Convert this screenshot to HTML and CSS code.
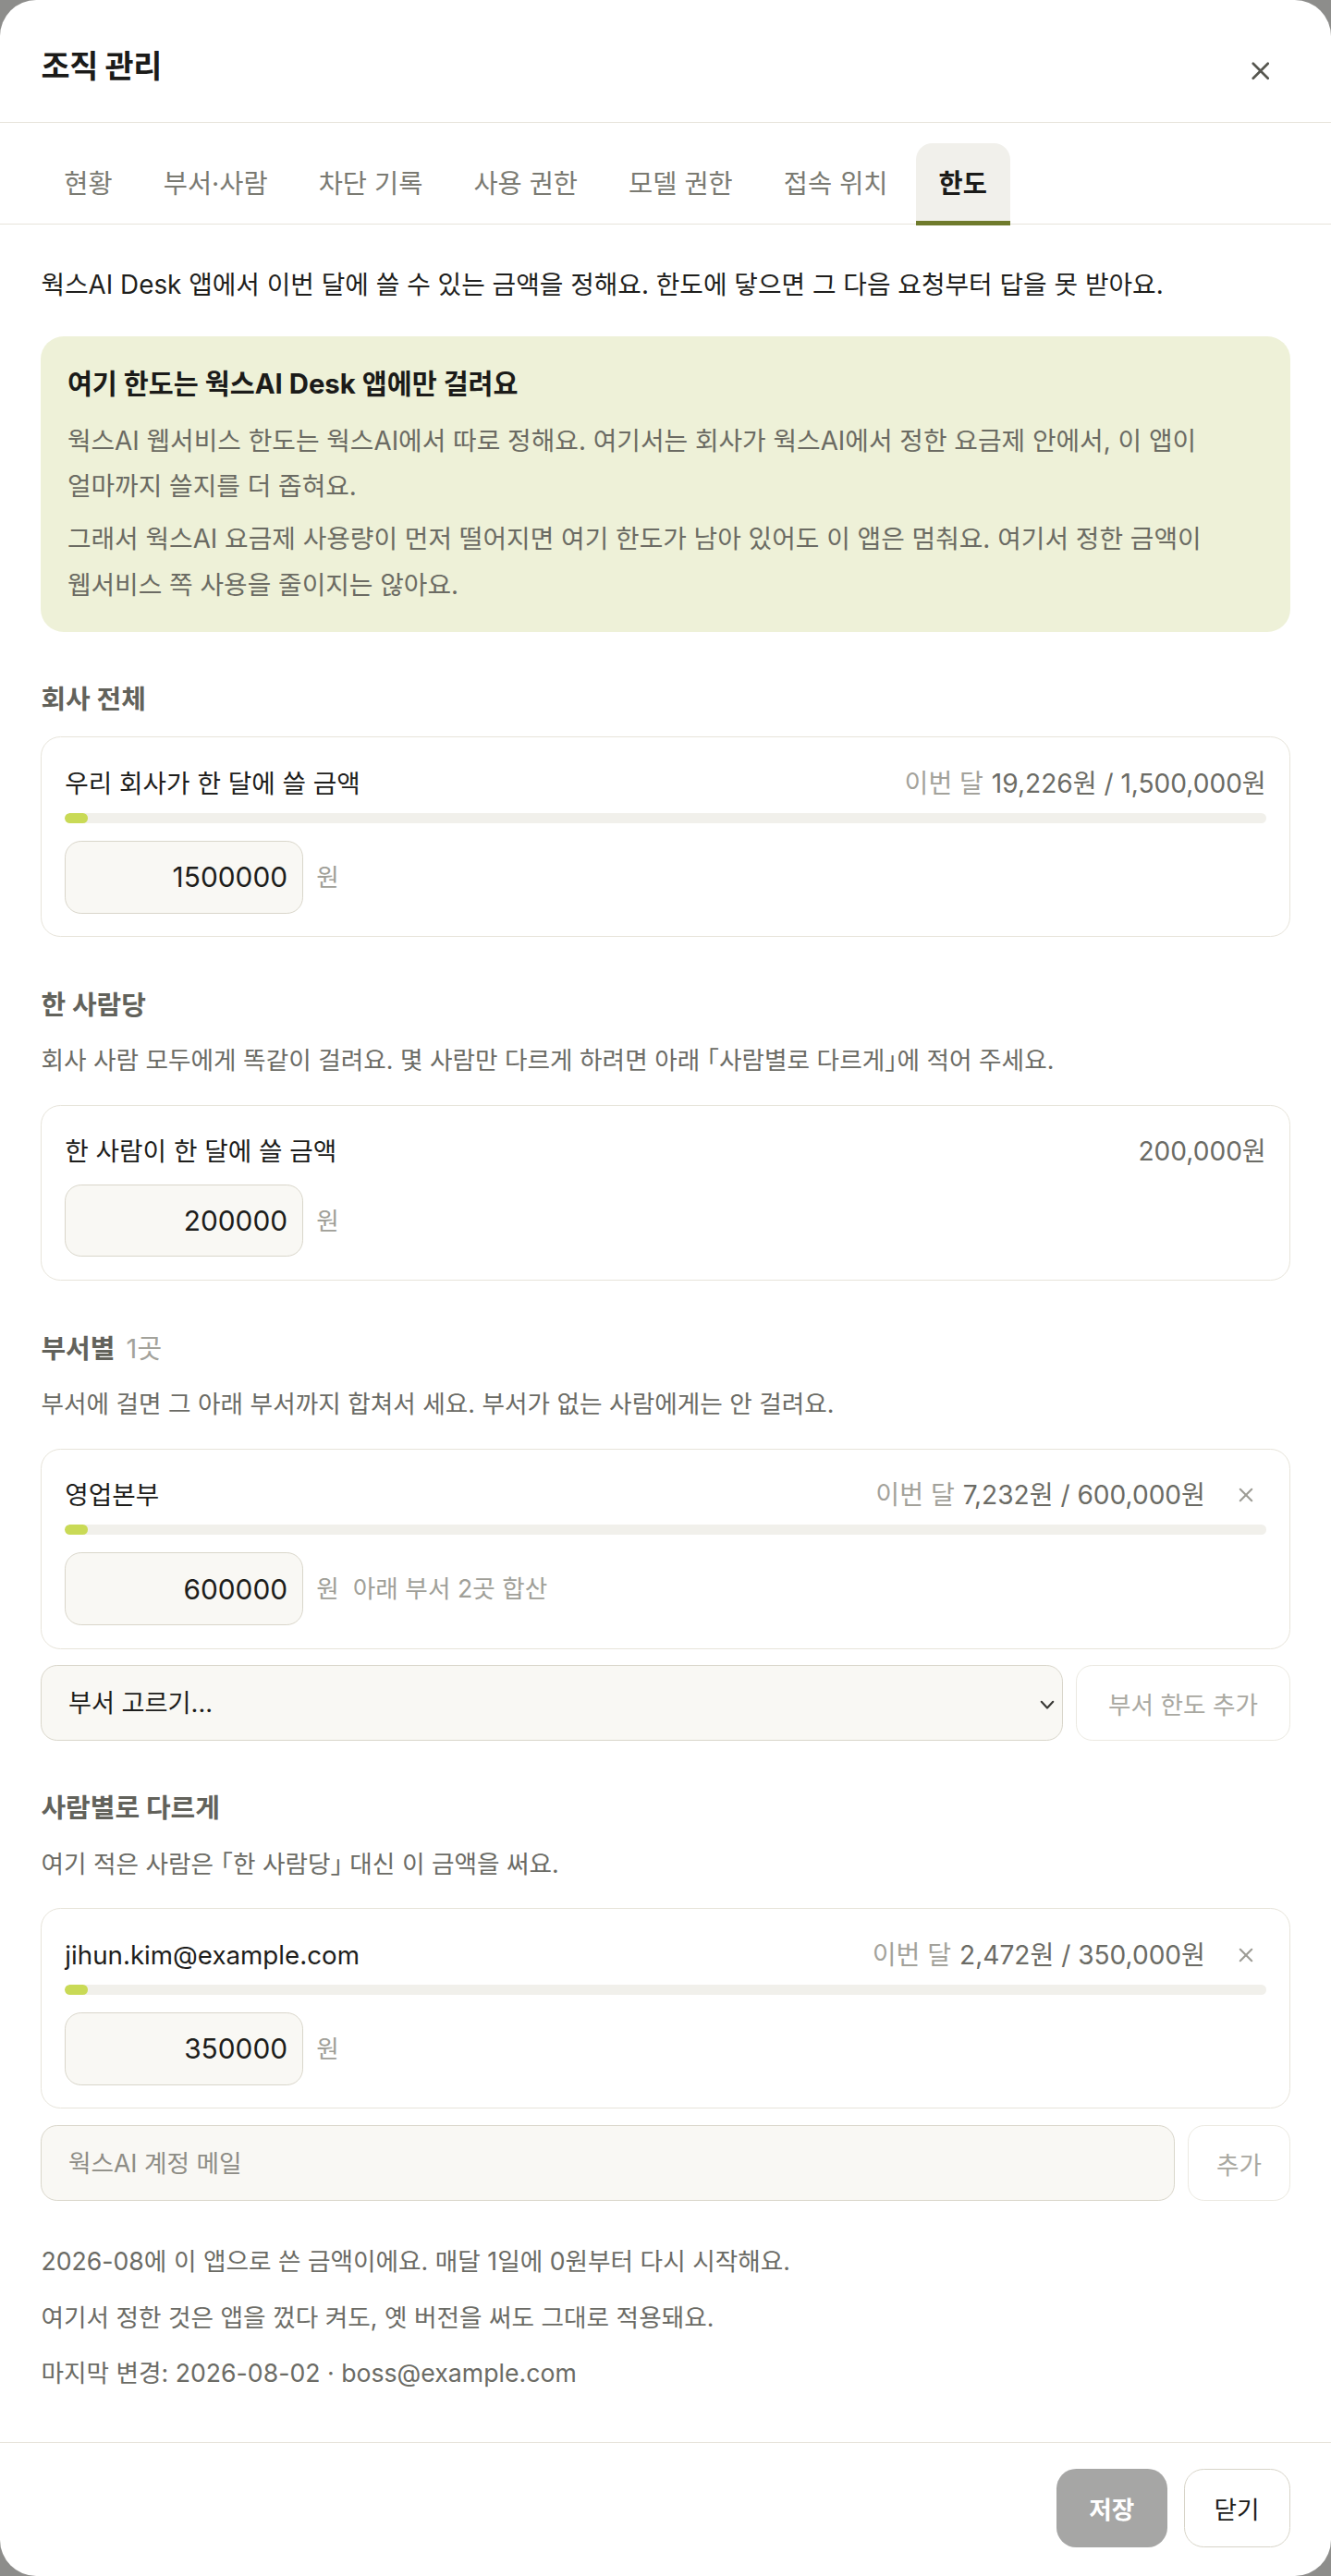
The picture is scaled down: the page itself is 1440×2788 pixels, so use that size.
FILE: index.html
```html
<!DOCTYPE html>
<html lang="ko">
<head>
<meta charset="utf-8">
<title>조직 관리</title>
<link rel="stylesheet" href="styles.css">
</head>
<body>
<div class="modal">
  <header class="modal-head">
    <h1 class="modal-title">조직 관리</h1>
    <button class="icon-btn close-btn" aria-label="닫기">
      <svg width="11" height="11" viewBox="0 0 11 11"><path d="M1 1L10 10M10 1L1 10" stroke="#56564f" stroke-width="1.5" stroke-linecap="round"/></svg>
    </button>
  </header>

  <nav class="tabs">
    <span class="tab">현황</span>
    <span class="tab">부서·사람</span>
    <span class="tab">차단 기록</span>
    <span class="tab">사용 권한</span>
    <span class="tab">모델 권한</span>
    <span class="tab">접속 위치</span>
    <span class="tab active">한도</span>
  </nav>

  <main class="modal-body">
    <p class="intro">웍스AI Desk 앱에서 이번 달에 쓸 수 있는 금액을 정해요. 한도에 닿으면 그 다음 요청부터 답을 못 받아요.</p>

    <div class="info">
      <p class="info-title">여기 한도는 웍스AI Desk 앱에만 걸려요</p>
      <p class="info-text">웍스AI 웹서비스 한도는 웍스AI에서 따로 정해요. 여기서는 회사가 웍스AI에서 정한 요금제 안에서, 이 앱이 얼마까지 쓸지를 더 좁혀요.</p>
      <p class="info-text">그래서 웍스AI 요금제 사용량이 먼저 떨어지면 여기 한도가 남아 있어도 이 앱은 멈춰요. 여기서 정한 금액이 웹서비스 쪽 사용을 줄이지는 않아요.</p>
    </div>

    <section class="sec">
      <h2 class="sec-label">회사 전체</h2>
      <div class="card">
        <div class="card-row">
          <span class="card-name">우리 회사가 한 달에 쓸 금액</span>
          <span class="meta"><span class="meta-label">이번 달</span>19,226원 / 1,500,000원</span>
        </div>
        <div class="bar"><div class="bar-fill" style="width:1.28%"></div></div>
        <div class="amount">
          <input class="num-input" type="text" value="1500000">
          <span class="unit">원</span>
        </div>
      </div>
    </section>

    <section class="sec">
      <h2 class="sec-label">한 사람당</h2>
      <p class="sec-desc">회사 사람 모두에게 똑같이 걸려요. 몇 사람만 다르게 하려면 아래 「사람별로 다르게」에 적어 주세요.</p>
      <div class="card">
        <div class="card-row">
          <span class="card-name">한 사람이 한 달에 쓸 금액</span>
          <span class="meta">200,000원</span>
        </div>
        <div class="amount">
          <input class="num-input" type="text" value="200000">
          <span class="unit">원</span>
        </div>
      </div>
    </section>

    <section class="sec">
      <h2 class="sec-label">부서별 <span class="count">1곳</span></h2>
      <p class="sec-desc">부서에 걸면 그 아래 부서까지 합쳐서 세요. 부서가 없는 사람에게는 안 걸려요.</p>
      <div class="card">
        <div class="card-row">
          <span class="card-name">영업본부</span>
          <span class="meta-wrap">
            <span class="meta"><span class="meta-label">이번 달</span>7,232원 / 600,000원</span>
            <button class="icon-btn remove-btn" aria-label="삭제">
              <svg width="9" height="9" viewBox="0 0 9 9"><path d="M1 1L8 8M8 1L1 8" stroke="#9d9c95" stroke-width="1.2" stroke-linecap="round"/></svg>
            </button>
          </span>
        </div>
        <div class="bar"><div class="bar-fill" style="width:1.21%"></div></div>
        <div class="amount">
          <input class="num-input" type="text" value="600000">
          <span class="unit">원 &nbsp;아래 부서 2곳 합산</span>
        </div>
      </div>
      <div class="add-row">
        <div class="select-wrap">
          <select class="select">
            <option>부서 고르기...</option>
          </select>
          <svg class="chevron" width="9" height="6" viewBox="0 0 9 6"><path d="M1 1L4.5 4.8L8 1" fill="none" stroke="#3a3a36" stroke-width="1.2" stroke-linecap="round" stroke-linejoin="round"/></svg>
        </div>
        <button class="ghost-btn dept-add">부서 한도 추가</button>
      </div>
    </section>

    <section class="sec">
      <h2 class="sec-label">사람별로 다르게</h2>
      <p class="sec-desc">여기 적은 사람은 「한 사람당」 대신 이 금액을 써요.</p>
      <div class="card">
        <div class="card-row">
          <span class="card-name">jihun.kim@example.com</span>
          <span class="meta-wrap">
            <span class="meta"><span class="meta-label">이번 달</span>2,472원 / 350,000원</span>
            <button class="icon-btn remove-btn" aria-label="삭제">
              <svg width="9" height="9" viewBox="0 0 9 9"><path d="M1 1L8 8M8 1L1 8" stroke="#9d9c95" stroke-width="1.2" stroke-linecap="round"/></svg>
            </button>
          </span>
        </div>
        <div class="bar"><div class="bar-fill" style="width:0.71%"></div></div>
        <div class="amount">
          <input class="num-input" type="text" value="350000">
          <span class="unit">원</span>
        </div>
      </div>
      <div class="add-row">
        <input class="text-input" type="text" placeholder="웍스AI 계정 메일">
        <button class="ghost-btn person-add">추가</button>
      </div>
    </section>

    <div class="notes">
      <p>2026-08에 이 앱으로 쓴 금액이에요. 매달 1일에 0원부터 다시 시작해요.</p>
      <p>여기서 정한 것은 앱을 껐다 켜도, 옛 버전을 써도 그대로 적용돼요.</p>
      <p>마지막 변경: 2026-08-02 · boss@example.com</p>
    </div>
  </main>

  <footer class="modal-foot">
    <button class="btn btn-save">저장</button>
    <button class="btn btn-close">닫기</button>
  </footer>
</div>
</body>
</html>
```

FILE: styles.css
```css
html {
  zoom: 1.77778;
}

body {
  margin: 0;
  background: #8d8d8b;
  font-family: "Inter", "Noto Sans CJK KR", sans-serif;
  color: #1d1d1b;
  font-size: 15px;
  line-height: 22px;
  word-break: keep-all;
}

* {
  box-sizing: border-box;
}

.modal {
  width: 810px;
  min-height: 1568px;
  background: #ffffff;
  border-radius: 22px;
  display: flex;
  flex-direction: column;
  overflow: hidden;
}

.modal-head {
  height: 75px;
  padding: 0 28px 0 25px;
  display: flex;
  align-items: center;
  justify-content: space-between;
  border-bottom: 1px solid #e7e4db;
}

.modal-title {
  margin: 6px 0 0;
  font-size: 19px;
  line-height: 28px;
  font-weight: 700;
  letter-spacing: -0.2px;
  color: #1b1b19;
}

.icon-btn {
  border: 0;
  background: transparent;
  padding: 0;
  display: flex;
  align-items: center;
  justify-content: center;
  cursor: pointer;
}

.close-btn {
  width: 30px;
  height: 30px;
  margin-top: 12px;
}

.tabs {
  display: flex;
  gap: 3px;
  padding: 12px 25px 0;
  border-bottom: 1px solid #e7e4db;
}

.tab {
  height: 50px;
  padding: 2px 14px 0;
  display: flex;
  align-items: center;
  font-size: 16px;
  color: #7a7a72;
  border-radius: 10px 10px 0 0;
  border-bottom: 3px solid transparent;
  margin-bottom: -1px;
}

.tab.active {
  background: #f1f0eb;
  color: #1b1b19;
  font-weight: 700;
  border-bottom-color: #6f7b2c;
}

.modal-body {
  flex: 1;
  padding: 26px 25px 28px;
}

.intro {
  margin: 0;
  font-size: 15.65px;
  color: #1f1f1d;
}

.info {
  margin-top: 20px;
  background: #eef1d8;
  border-radius: 14px;
  padding: 18px 16px 14px;
}

.info-title {
  margin: 0 0 10px;
  font-size: 16.5px;
  font-weight: 700;
  color: #1b1b19;
}

.info-text {
  margin: 0;
  font-size: 15.65px;
  line-height: 28px;
  color: #6b6b63;
}

.info-text + .info-text {
  margin-top: 4px;
}

.sec {
  margin-top: 30px;
}

.sec-label {
  margin: 0 0 12px;
  font-size: 16.3px;
  line-height: 22px;
  font-weight: 700;
  color: #62625b;
}

.count {
  font-weight: 400;
  color: #a3a29b;
  margin-left: 3px;
}

.sec-desc {
  margin: 2px 0 16px;
  color: #6b6b65;
  font-feature-settings: "halt";
}

.card {
  border: 1px solid #e7e4da;
  border-radius: 12px;
  padding: 17px 14px 14px;
  display: flex;
  flex-direction: column;
}

.card-row {
  display: flex;
  align-items: center;
  justify-content: space-between;
  height: 22px;
}

.card-name {
  font-size: 15.6px;
  color: #1d1d1b;
}

.meta-wrap {
  display: flex;
  align-items: center;
}

.meta {
  font-size: 15.8px;
  color: #6b6b65;
}

.meta-label {
  color: #a3a29b;
  margin-right: 5px;
}

.remove-btn {
  width: 24px;
  height: 22px;
  margin-left: 13px;
}

.bar {
  margin-top: 7px;
  height: 6px;
  border-radius: 3px;
  background: #f1f0eb;
  overflow: hidden;
}

.bar-fill {
  height: 100%;
  min-width: 14px;
  border-radius: 3px;
  background: #c9da56;
}

.amount {
  margin-top: 9px;
  display: flex;
  align-items: center;
  gap: 8px;
}

.bar + .amount {
  margin-top: 11px;
}

.num-input {
  width: 145px;
  height: 44px;
  border: 1px solid #d9d6ca;
  border-radius: 10px;
  background: #f9f8f4;
  text-align: right;
  padding: 0 9px 0 10px;
  font-family: inherit;
  font-size: 16.8px;
  color: #1d1d1b;
}

.unit {
  color: #a09f98;
}

.add-row {
  margin-top: 10px;
  display: flex;
  gap: 8px;
}

.select-wrap {
  flex: 1;
  position: relative;
}

.select {
  appearance: none;
  -webkit-appearance: none;
  width: 100%;
  height: 46px;
  border: 1px solid #d9d6ca;
  border-radius: 10px;
  background: #f9f8f4;
  padding: 0 30px 0 16px;
  font-family: inherit;
  font-size: 15.3px;
  color: #1d1d1b;
}

.chevron {
  position: absolute;
  right: 5px;
  top: 21px;
  pointer-events: none;
}

.text-input {
  flex: 1;
  height: 46px;
  border: 1px solid #d9d6ca;
  border-radius: 10px;
  background: #f9f8f4;
  padding: 0 16px;
  font-family: inherit;
  font-size: 15px;
  color: #1d1d1b;
}

.text-input::placeholder {
  color: #8e8d86;
}

.ghost-btn {
  height: 46px;
  border: 1px solid #ebe9e1;
  border-radius: 10px;
  background: #ffffff;
  color: #a9a8a1;
  font-family: inherit;
  font-size: 15px;
  padding: 0;
}

.dept-add {
  width: 130px;
}

.person-add {
  width: 62px;
}

.notes {
  margin-top: 26px;
  display: flex;
  flex-direction: column;
  gap: 12px;
  color: #6b6b65;
}

.notes p {
  margin: 0;
}

.modal-foot {
  border-top: 1px solid #e7e4db;
  padding: 16px 25px 17px;
  display: flex;
  justify-content: flex-end;
  gap: 10px;
}

.btn {
  height: 48px;
  border-radius: 12px;
  font-family: inherit;
  font-size: 15px;
  cursor: pointer;
}

.btn-save {
  border: 0;
  background: #a6a6a5;
  color: #ffffff;
  font-weight: 700;
  padding: 0 20px;
}

.btn-close {
  border: 1px solid #d7d4c8;
  background: #ffffff;
  color: #1d1d1b;
  padding: 0 18px;
}
```
